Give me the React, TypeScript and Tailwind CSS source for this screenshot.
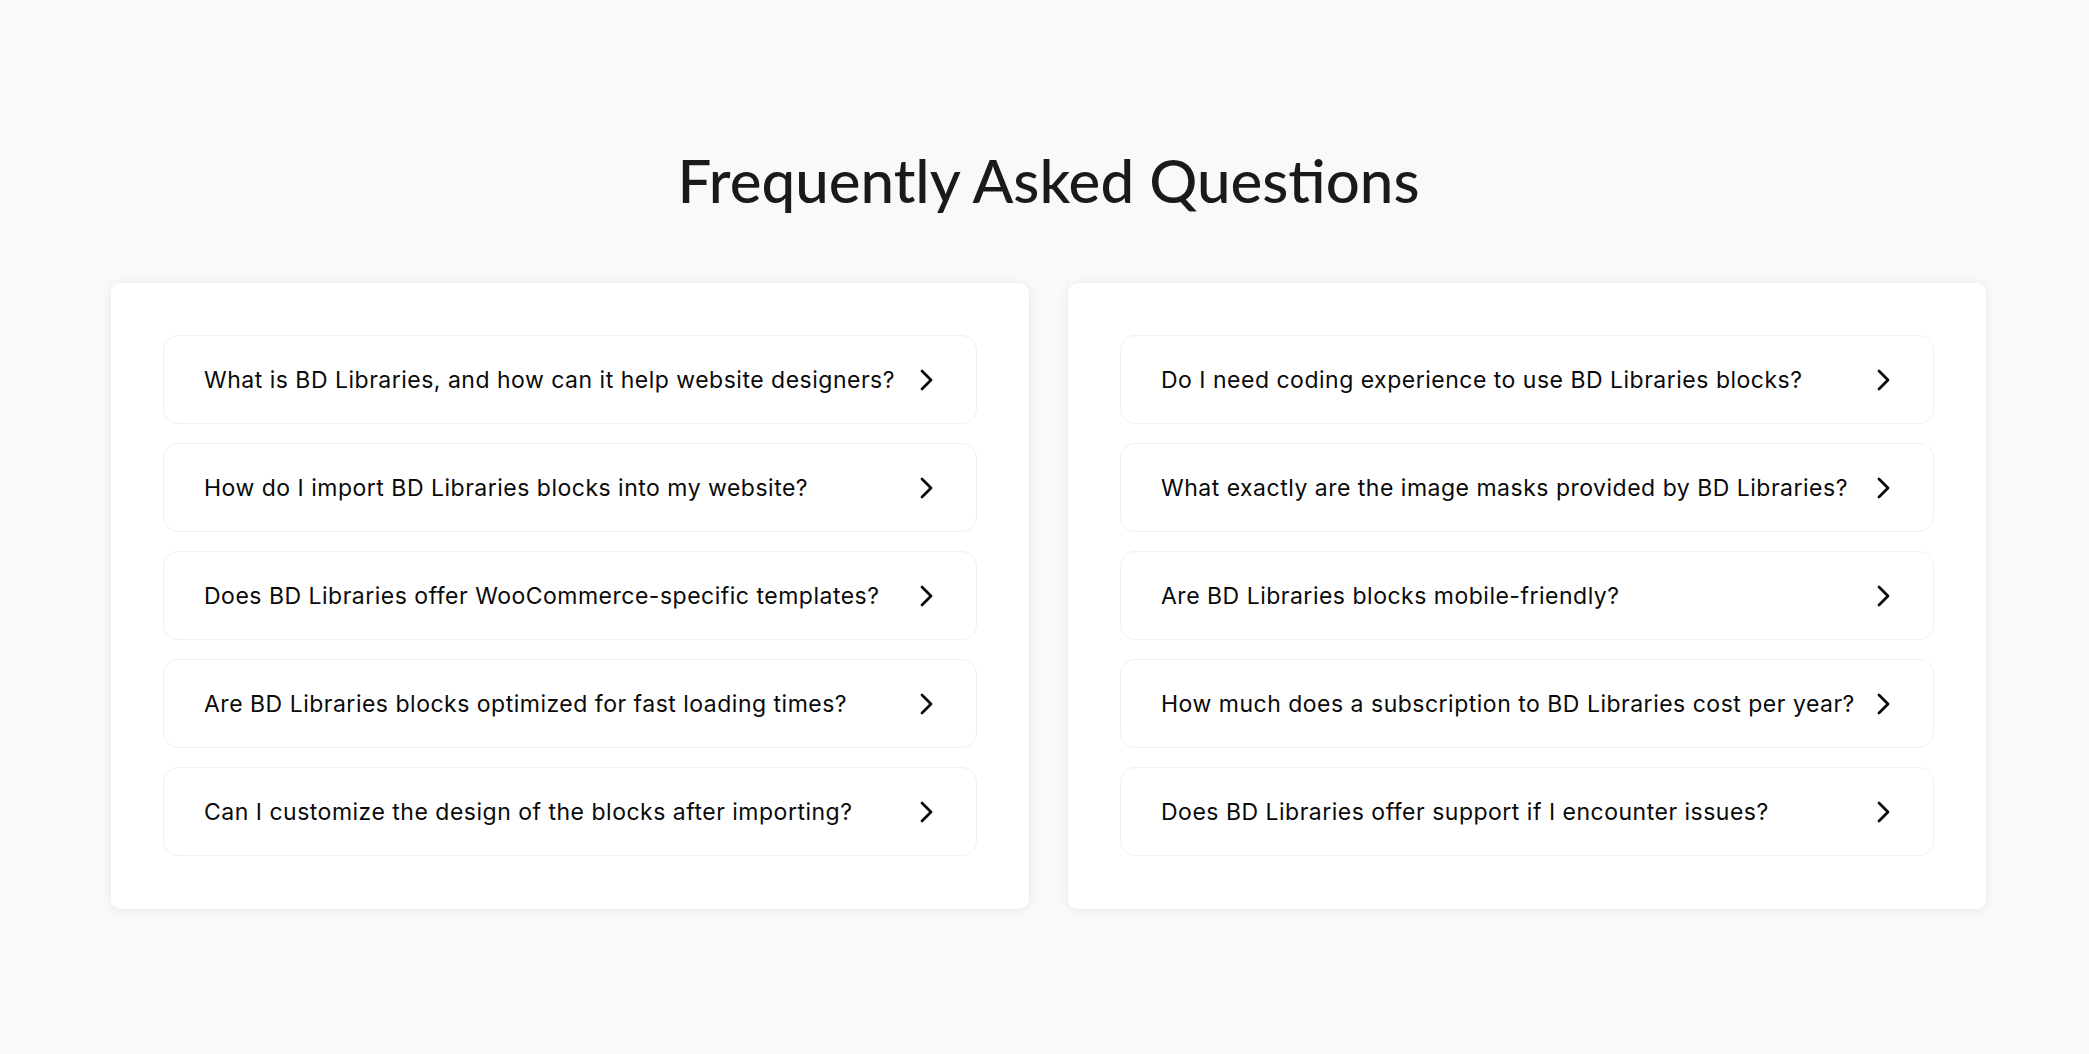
import React from "react";

const left = [
  "What is BD Libraries, and how can it help website designers?",
  "How do I import BD Libraries blocks into my website?",
  "Does BD Libraries offer WooCommerce-specific templates?",
  "Are BD Libraries blocks optimized for fast loading times?",
  "Can I customize the design of the blocks after importing?",
];
const right = [
  "Do I need coding experience to use BD Libraries blocks?",
  "What exactly are the image masks provided by BD Libraries?",
  "Are BD Libraries blocks mobile-friendly?",
  "How much does a subscription to BD Libraries cost per year?",
  "Does BD Libraries offer support if I encounter issues?",
];

function Chevron() {
  return (
    <svg width="14" height="22" viewBox="0 0 14 22" className="shrink-0" fill="none">
      <polyline points="2,2 11,11 2,20" stroke="#0a0a0a" strokeWidth="2.8" strokeLinecap="round" strokeLinejoin="round" />
    </svg>
  );
}

function Item({ q }: { q: string }) {
  return (
    <div className="flex h-[89px] items-center gap-5 rounded-[15px] border border-[#f0f0f0] bg-white pl-[40px] pr-[42px]">
      <span className="flex-1 whitespace-nowrap pt-[2px] text-[23px] tracking-[0.5px] text-[#0a0a0a]" style={{ fontFamily: "Inter, sans-serif" }}>{q}</span>
      <Chevron />
    </div>
  );
}

function Card({ items }: { items: string[] }) {
  return (
    <div className="flex flex-col gap-[19px] rounded-[10px] bg-white px-[52px] pt-[52px] pb-[53px] shadow-[0_1px_12px_rgba(0,0,0,0.07)]">
      {items.map((q) => (
        <Item key={q} q={q} />
      ))}
    </div>
  );
}

export default function App() {
  return (
    <div className="min-h-[1054px] bg-[#f9f9f9] pl-[111px] pr-[103px] pt-[140px]">
      <h1 className="text-center text-[60px] font-medium leading-[80px] text-[#1a1a1a]" style={{ fontFamily: "Lato, sans-serif" }}>
        Frequently Asked Questions
      </h1>
      <div className="mt-[63px] grid grid-cols-2 gap-[39px]">
        <Card items={left} />
        <Card items={right} />
      </div>
    </div>
  );
}
